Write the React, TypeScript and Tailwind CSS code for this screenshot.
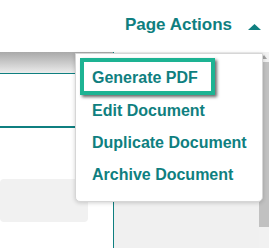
import { ReactNode } from "react"

const MenuItem = ({ children }: { children: ReactNode }) => (
  <div className="h-[32px] flex items-center pl-[12px] text-[16px] font-bold text-[#0f7f80]">
    {children}
  </div>
)

const App = () => {
  return (
    <div
      className="relative w-[269px] h-[248px] overflow-hidden bg-white"
      style={{ fontFamily: '"Liberation Sans", Arial, sans-serif' }}
    >
      {/* header */}
      <div className="h-[52px] flex justify-end items-start pt-[15px] pr-[8px]">
        <span className="text-[17px] leading-[20px] font-bold text-[#0f7f80]">Page Actions</span>
        <svg width="13" height="6" viewBox="0 0 13 6" className="ml-[16px] mt-[9px]">
          <polygon points="0,6 6.5,0 13,6" fill="#0f7f80" />
        </svg>
      </div>

      {/* page body */}
      <div className="flex h-[196px]">
        <div className="w-[114px] border-r border-[#0f7f80] flex flex-col">
          <div className="h-[22px] bg-gradient-to-b from-[#a9a9a9] to-[#ececec] border-b border-[#0f7f80]" />
          <div className="h-[52px]" />
          <div className="h-[2px] bg-[#0f7f80]" />
          <div className="h-[51px]" />
          <div className="h-[43px] w-[88px] rounded-[4px] bg-[#f1f1f1]" />
        </div>
        <div className="flex-1 bg-[#f0f0f0]" />
        <div className="w-[10px] flex flex-col bg-[#f1f1f1]">
          <div className="h-[10px] flex items-center justify-center">
            <svg width="6" height="4" viewBox="0 0 6 4">
              <polygon points="0,4 3,0 6,4" fill="#a3a3a3" />
            </svg>
          </div>
          <div className="h-[165px] bg-[#c1c1c1]" />
        </div>
      </div>

      {/* dropdown menu */}
      <div className="absolute left-[75px] top-[53px] w-[188px] h-[149px] bg-white border border-[#d6d6d6] rounded-b-[5px] shadow-[0_1px_4px_rgba(0,0,0,0.18)] pt-[4px] pl-[4px]">
        <div className="w-[135px] h-[37px] border-[4px] border-[#1db393] shadow-[2px_2px_3px_rgba(0,0,0,0.6)] flex items-center pl-[8px] pt-[3px] text-[16px] font-bold text-[#0f7f80]">
          Generate PDF
        </div>
        <MenuItem>Edit Document</MenuItem>
        <MenuItem>Duplicate Document</MenuItem>
        <MenuItem>Archive Document</MenuItem>
      </div>
    </div>
  )
}

export default App
